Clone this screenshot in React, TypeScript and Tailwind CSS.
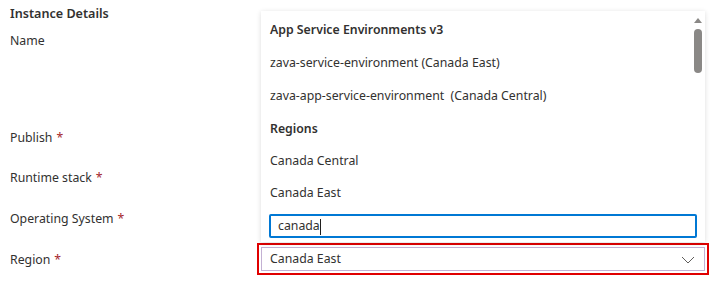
import React from 'react';

const Req = () => <span className="text-[#a4262c] ml-[4px]">*</span>;

const App = () => {
  const items: { label: string; header?: boolean; h: string }[] = [
    { label: 'App Service Environments v3', header: true, h: 'h-[33px]' },
    { label: 'zava-service-environment (Canada East)', h: 'h-[33px]' },
    { label: 'zava-app-service-environment\u00a0 (Canada Central)', h: 'h-[33px]' },
    { label: 'Regions', header: true, h: 'h-[33px]' },
    { label: 'Canada Central', h: 'h-[31px]' },
    { label: 'Canada East', h: 'h-[33px]' },
  ];

  return (
    <div
      className="relative w-[716px] h-[285px] bg-white text-[#323130] text-[12.3px] overflow-hidden"
      style={{ fontFamily: '"Segoe UI", "Noto Sans", sans-serif' }}
    >
      {/* Form */}
      <div className="flex flex-col px-[10px]">
        <div className="h-[29px] flex items-center text-[12.6px] font-semibold">Instance Details</div>
        <div className="h-[25px] flex items-center">Name</div>
        <div className="h-[64px]" />
        <div className="h-[40px] flex items-center">
          Publish <Req />
        </div>
        <div className="h-[41px] flex items-center">
          Runtime stack <Req />
        </div>
        <div className="h-[40px] flex items-center">
          Operating System <Req />
        </div>
        <div className="mt-[4px] grid grid-cols-[247px_1fr]">
          <div className="flex items-center pt-[2px]">
            Region <Req />
          </div>
          <div className="w-[452px] h-[32px] border-2 border-[#e00000] p-[2px]">
            <div className="h-full border border-[#c3b1d3] flex items-center justify-between pl-[8px] pr-[9px] pt-[1px]">
              <span>Canada East</span>
              <svg width="14" height="8" viewBox="0 0 14 8" fill="none">
                <path d="M1 1l6 6 6-6" stroke="#605e5c" strokeWidth="1" />
              </svg>
            </div>
          </div>
        </div>
      </div>

      {/* Dropdown */}
      <div className="absolute left-[261px] top-[11px] w-[444px] bg-white shadow-[0_1px_5px_rgba(0,0,0,0.14)] pt-[3px] pb-[4px]">
        <div className="flex">
          <div className="flex-1 flex flex-col pl-[9px]">
            {items.map((it, i) => (
              <div key={i} className={`${it.h} flex items-center ${it.header ? 'font-semibold' : ''}`}>
                {it.label}
              </div>
            ))}
          </div>
          <div className="w-[14px] flex flex-col items-center pt-[4px]">
            <svg width="8" height="5" viewBox="0 0 8 5">
              <path d="M0 5L4 0l4 5z" fill="#8a8886" />
            </svg>
            <div className="mt-[6px] w-[8px] h-[44px] rounded-full bg-[#8a8886]" />
          </div>
        </div>
        <div className="mt-[4px] ml-[8px] mr-[8px] h-[24px] border-2 border-[#0078d4] rounded-[2px] flex items-center pl-[7px] pt-[1px]">
          <span>canada</span>
          <span className="w-px h-[16px] bg-[#201f1e]" />
        </div>
      </div>
    </div>
  );
};

export default App;
